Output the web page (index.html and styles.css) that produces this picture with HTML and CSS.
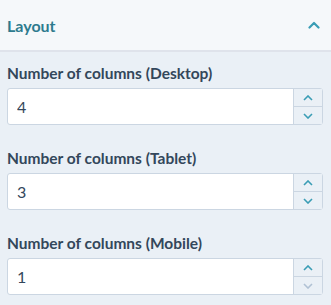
FILE: index.html
```html
<!DOCTYPE html>
<html lang="en">
<head>
    <meta charset="UTF-8">
    <meta name="viewport" content="width=device-width, initial-scale=1.0">
    <title>Layout</title>
    <link rel="stylesheet" href="styles.css">
</head>
<body>
    <div class="panel">
        <div class="panel-header">
            <span class="panel-title">Layout</span>
            <svg class="collapse" width="12" height="8" viewBox="0 0 12 8"><path d="M1.5 6.5L6 2l4.5 4.5" fill="none" stroke="currentColor" stroke-width="2.2" stroke-linecap="round" stroke-linejoin="round"/></svg>
        </div>
        <div class="panel-body">
            <div class="field">
                <label for="colsDesktop">Number of columns (Desktop)</label>
                <div class="number-input">
                    <input type="text" id="colsDesktop" value="4">
                    <div class="stepper">
                        <button type="button" class="step"><svg width="10" height="6" viewBox="0 0 10 6"><path d="M1 5l4-4 4 4" fill="none" stroke="currentColor" stroke-width="1.6"/></svg></button>
                        <button type="button" class="step"><svg width="10" height="6" viewBox="0 0 10 6"><path d="M1 1l4 4 4-4" fill="none" stroke="currentColor" stroke-width="1.6"/></svg></button>
                    </div>
                </div>
            </div>
            <div class="field">
                <label for="colsTablet">Number of columns (Tablet)</label>
                <div class="number-input">
                    <input type="text" id="colsTablet" value="3">
                    <div class="stepper">
                        <button type="button" class="step"><svg width="10" height="6" viewBox="0 0 10 6"><path d="M1 5l4-4 4 4" fill="none" stroke="currentColor" stroke-width="1.6"/></svg></button>
                        <button type="button" class="step"><svg width="10" height="6" viewBox="0 0 10 6"><path d="M1 1l4 4 4-4" fill="none" stroke="currentColor" stroke-width="1.6"/></svg></button>
                    </div>
                </div>
            </div>
            <div class="field">
                <label for="colsMobile">Number of columns (Mobile)</label>
                <div class="number-input">
                    <input type="text" id="colsMobile" value="1">
                    <div class="stepper">
                        <button type="button" class="step"><svg width="10" height="6" viewBox="0 0 10 6"><path d="M1 5l4-4 4 4" fill="none" stroke="currentColor" stroke-width="1.6"/></svg></button>
                        <button type="button" class="step disabled"><svg width="10" height="6" viewBox="0 0 10 6"><path d="M1 1l4 4 4-4" fill="none" stroke="currentColor" stroke-width="1.6"/></svg></button>
                    </div>
                </div>
            </div>
        </div>
    </div>
</body>
</html>
```

FILE: styles.css
```css
body {
    margin: 0;
    font-family: Lato, "Noto Sans", sans-serif;
    background-color: #eaf0f6;
    color: #33475b;
}
.panel-header {
    height: 50px;
    display: flex;
    align-items: center;
    justify-content: space-between;
    padding: 0 11px 0 7px;
    background-color: #f5f8fa;
    border-bottom: 2px solid #dfe3eb;
}
.panel-title {
    font-size: 16px;
    font-weight: 700;
    color: #2d7b8e;
}
.collapse {
    color: #3a9db5;
}
.panel-body {
    padding: 11px 8px 0 7px;
}
.field {
    margin-bottom: 23px;
}
.field label {
    display: block;
    font-size: 15.5px;
    font-weight: 700;
    line-height: 20px;
    margin-bottom: 5px;
}
.number-input {
    display: flex;
    height: 37px;
    background-color: #fff;
    border: 1px solid #cbd6e2;
    border-radius: 3px;
    box-sizing: border-box;
}
.number-input input {
    flex: 1;
    min-width: 0;
    border: none;
    padding: 0 9px;
    font-family: inherit;
    font-size: 16px;
    color: #33475b;
    background: transparent;
    outline: none;
}
.stepper {
    width: 28px;
    display: flex;
    flex-direction: column;
    border-left: 1px solid #cbd6e2;
    background-color: #eaf0f6;
}
.step {
    flex: 1;
    display: flex;
    align-items: center;
    justify-content: center;
    padding: 0;
    border: none;
    background: transparent;
    color: #3a9db5;
    cursor: pointer;
}
.step + .step {
    border-top: 1px solid #cbd6e2;
}
.step.disabled {
    color: #b0c1d4;
}
```
